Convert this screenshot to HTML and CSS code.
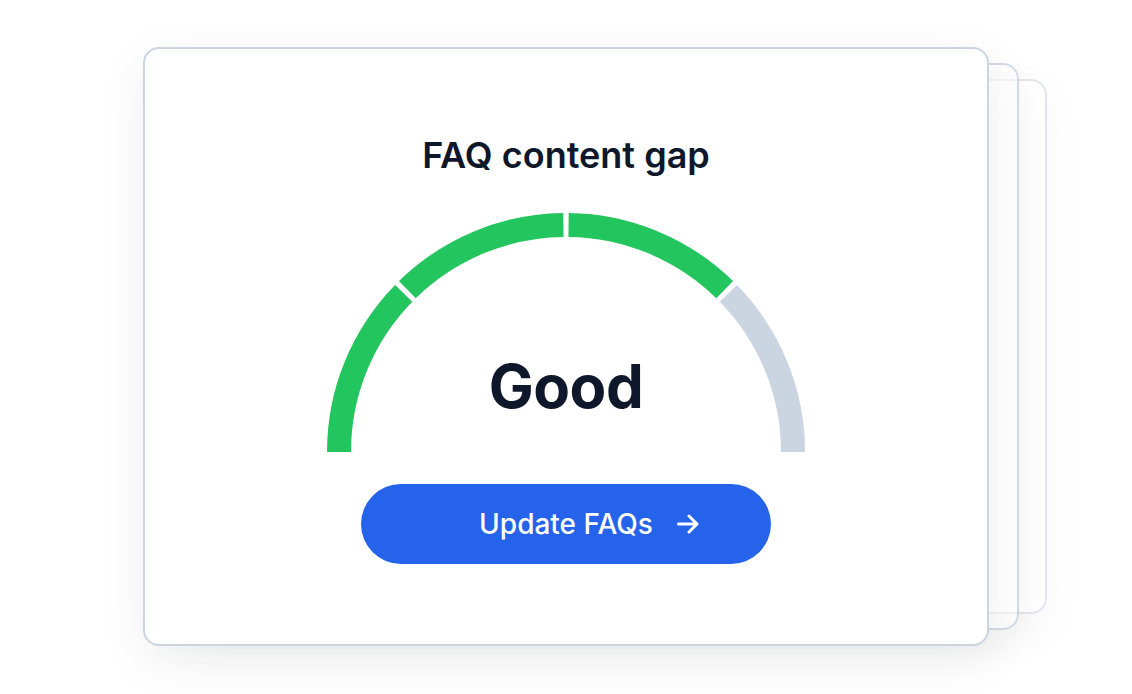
FILE: index.html
```html
<!DOCTYPE html>
<html lang="en">
<head>
<meta charset="utf-8">
<title>FAQ content gap</title>
<link rel="stylesheet" href="styles.css">
</head>
<body>
<div class="stage">
  <div class="deck">
    <div class="ghost ghost-far"></div>
    <div class="ghost ghost-near"></div>
    <section class="card">
      <h2 class="title">FAQ content gap</h2>
      <div class="gauge">
        <svg class="gauge-arc" width="480" height="240" viewBox="0 0 480 240" aria-hidden="true">
          <path class="seg seg-on" d="M13 240 A227 227 0 0 1 77.67 81.33"/>
          <path class="seg seg-on" d="M81.33 77.67 A227 227 0 0 1 237.43 13.01"/>
          <path class="seg seg-on" d="M242.57 13.01 A227 227 0 0 1 398.67 77.67"/>
          <path class="seg seg-off" d="M402.33 81.33 A227 227 0 0 1 467 240"/>
        </svg>
        <div class="gauge-label">Good</div>
      </div>
      <button class="cta" type="button">
        <span class="cta-spacer"></span>
        <span class="cta-text">Update FAQs</span>
        <svg class="cta-icon" width="22" height="20" viewBox="0 0 22 20" aria-hidden="true">
          <path d="M1.5 10 H20 M12 2 L20 10 L12 18"/>
        </svg>
      </button>
    </section>
  </div>
</div>
</body>
</html>
```

FILE: styles.css
```css
* { box-sizing: border-box; }

html, body {
  margin: 0;
  padding: 0;
  background: #ffffff;
}

body {
  font-family: Inter, "Noto Sans", "Liberation Sans", sans-serif;
  color: #0f172a;
  min-height: 694px;
}

.stage {
  padding: 47px 0 0 143px;
}

.deck {
  position: relative;
  width: 846px;
  height: 599px;
}

.ghost {
  position: absolute;
  width: 846px;
  border: 2px solid #cbd5e1;
  border-radius: 16px;
  background: rgba(255, 255, 255, 0.6);
  box-shadow: 0 14px 44px rgba(15, 23, 42, 0.05);
}

.ghost-near {
  left: 30px;
  top: 16px;
  height: 567px;
  opacity: 0.85;
}

.ghost-far {
  left: 58px;
  top: 32px;
  height: 535px;
  opacity: 0.55;
}

.card {
  position: relative;
  width: 846px;
  height: 599px;
  border: 2px solid #cbd5e1;
  border-radius: 16px;
  background: #ffffff;
  box-shadow: 0 14px 50px rgba(15, 23, 42, 0.07);
  display: flex;
  flex-direction: column;
  align-items: center;
  padding-top: 84px;
}

.title {
  margin: 0;
  font-size: 36px;
  line-height: 44px;
  font-weight: 600;
  color: #0f172a;
  letter-spacing: 0;
}

.gauge {
  margin-top: 35px;
  display: grid;
  width: 480px;
  height: 240px;
}

.gauge-arc,
.gauge-label {
  grid-area: 1 / 1;
}

.gauge-arc {
  display: block;
}

.seg {
  fill: none;
  stroke-width: 24;
  stroke-linecap: butt;
}

.seg-on { stroke: #22c55e; }
.seg-off { stroke: #cbd5e1; }

.gauge-label {
  align-self: end;
  justify-self: center;
  font-size: 60px;
  line-height: 60px;
  font-weight: 700;
  letter-spacing: -0.5px;
  color: #0f172a;
  margin-bottom: 36px;
}

.cta {
  margin-top: 32px;
  width: 410px;
  height: 80px;
  border: 0;
  border-radius: 40px;
  background: #2563eb;
  color: #ffffff;
  display: flex;
  align-items: center;
  justify-content: center;
  gap: 24px;
  font-family: Inter, "Noto Sans", "Liberation Sans", sans-serif;
  font-size: 28px;
  font-weight: 500;
  padding: 0;
  cursor: pointer;
}

.cta-spacer {
  width: 22px;
  height: 20px;
}

.cta-text {
  line-height: 32px;
}

.cta-icon {
  display: block;
}

.cta-icon path {
  fill: none;
  stroke: #ffffff;
  stroke-width: 3;
  stroke-linecap: round;
  stroke-linejoin: round;
}
```
